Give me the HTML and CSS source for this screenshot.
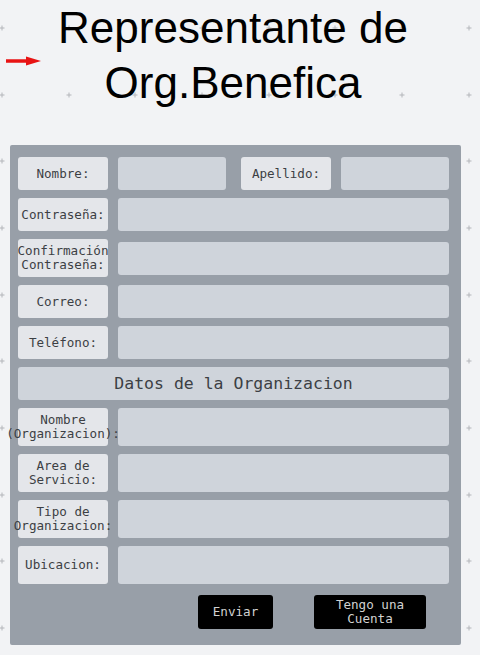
FILE: index.html
```html
<!DOCTYPE html>
<html lang="es">
<head>
<meta charset="utf-8">
<title>Representante de Org.Benefica</title>
<link rel="stylesheet" href="styles.css">
</head>
<body>
<header class="header">
  <svg class="back-arrow" width="42" height="10" viewBox="0 0 42 10">
    <line x1="6" y1="5" x2="28" y2="5" stroke="#e81313" stroke-width="3.5"/>
    <polygon points="26,0.6 41,5 26,9.4" fill="#e81313"/>
  </svg>
  <h1 class="title">Representante de<br>Org.Benefica</h1>
</header>
<form class="panel">
  <div class="row row-split">
    <label class="lbl">Nombre:</label>
    <div class="field"></div>
    <label class="lbl lbl-second">Apellido:</label>
    <div class="field"></div>
  </div>
  <div class="row">
    <label class="lbl">Contraseña:</label>
    <div class="field"></div>
  </div>
  <div class="row row-tall">
    <label class="lbl">Confirmación<br>Contraseña:</label>
    <div class="field field-short"></div>
  </div>
  <div class="row">
    <label class="lbl">Correo:</label>
    <div class="field"></div>
  </div>
  <div class="row">
    <label class="lbl">Teléfono:</label>
    <div class="field"></div>
  </div>
  <div class="section">Datos de la Organizacion</div>
  <div class="row row-tall">
    <label class="lbl">Nombre<br>(Organizacion):</label>
    <div class="field"></div>
  </div>
  <div class="row row-tall">
    <label class="lbl">Area de<br>Servicio:</label>
    <div class="field"></div>
  </div>
  <div class="row row-tall">
    <label class="lbl">Tipo de<br>Organizacion:</label>
    <div class="field"></div>
  </div>
  <div class="row row-tall">
    <label class="lbl">Ubicacion:</label>
    <div class="field"></div>
  </div>
  <div class="actions">
    <button type="button" class="btn btn-send">Enviar</button>
    <button type="button" class="btn btn-account">Tengo una<br>Cuenta</button>
  </div>
</form>
</body>
</html>
```

FILE: styles.css
```css
html, body {
  margin: 0;
  padding: 0;
}

body {
  width: 480px;
  min-height: 655px;
  background-color: #f2f3f5;
  background-image: url("data:image/svg+xml,%3Csvg xmlns='http://www.w3.org/2000/svg' width='66.667' height='66.667'%3E%3Cpath d='M31.33 33.83h5M33.83 31.33v5' stroke='%23b4b6ba' stroke-width='1'/%3E%3C/svg%3E");
  background-size: 66.667px 66.667px;
  background-position: -31.8px -5.8px;
  font-family: "DejaVu Sans Mono", monospace;
}

.header {
  display: flex;
  align-items: flex-start;
  height: 110px;
}

.back-arrow {
  flex: none;
  margin-top: 56px;
}

.title {
  flex: 1;
  margin: 0;
  padding-right: 56px;
  font-family: "Liberation Sans", Arial, sans-serif;
  font-weight: 400;
  font-size: 44px;
  line-height: 55px;
  color: #000;
  text-align: center;
}

.panel {
  margin: 35px 0 0 10px;
  width: 451px;
  box-sizing: border-box;
  padding: 12px 12px 16px 8px;
  background: #989fa8;
  border-radius: 2px;
  display: flex;
  flex-direction: column;
  gap: 8px;
}

.row {
  display: flex;
  align-items: center;
  gap: 10px;
  height: 33px;
}

.row-tall {
  height: 38px;
}

.lbl {
  flex: none;
  width: 90px;
  height: 100%;
  box-sizing: border-box;
  display: flex;
  align-items: center;
  justify-content: center;
  text-align: center;
  white-space: nowrap;
  background: #e4e6ea;
  border-radius: 3px;
  font-size: 12.6px;
  line-height: 14px;
  color: #3c3f44;
}

.lbl-second {
  margin-left: 5px;
}

.field {
  flex: 1;
  height: 100%;
  background: #cfd4db;
  border-radius: 3px;
}

.field-short {
  height: 33px;
}

.section {
  height: 33px;
  display: flex;
  align-items: center;
  justify-content: center;
  background: #cfd4db;
  border-radius: 3px;
  font-size: 16.5px;
  color: #3c3f44;
}

.actions {
  display: flex;
  gap: 41px;
  padding-left: 180px;
  margin-top: 3px;
}

.btn {
  height: 34px;
  border: none;
  border-radius: 3px;
  background: #000;
  color: #d2d2d2;
  font-family: "DejaVu Sans Mono", monospace;
  font-size: 12.6px;
  line-height: 14px;
  padding: 0;
  cursor: pointer;
}

.btn-send {
  width: 75px;
}

.btn-account {
  width: 112px;
}
```
